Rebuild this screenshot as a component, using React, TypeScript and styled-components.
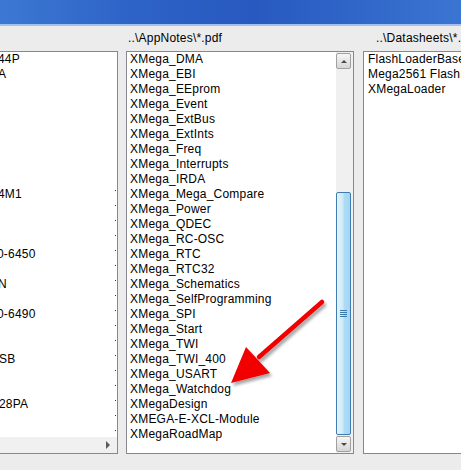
import styled, { createGlobalStyle } from "styled-components";

const GlobalStyle = createGlobalStyle`
	body {
		margin: 0;
		background: #ececec;
		font-family: "Liberation Sans", Arial, sans-serif;
	}
`;

const Window = styled.div`
	position: relative;
	width: 461px;
	height: 470px;
	overflow: hidden;
	background: #ececec;
`;

const TitleBar = styled.div`
	height: 24px;
	border-bottom: 2px solid #a3c1ee;
	background: linear-gradient(90deg, #3c78d3 0%, #2d62c6 30%, #2859c0 55%, #3168c9 80%, #3b75d2 100%);
`;

const Content = styled.div`
	display: grid;
	grid-template-columns: 118px 228px 160px;
	column-gap: 8px;
	padding-top: 5px;
`;

const Column = styled.div<{ $shift?: number }>`
	display: flex;
	flex-direction: column;
	margin-left: ${(p) => p.$shift || 0}px;
	min-width: 0;
`;

const Label = styled.div<{ $indent?: number }>`
	height: 15px;
	line-height: 15px;
	font-size: 12px;
	letter-spacing: 0.2px;
	color: #000;
	padding-left: ${(p) => p.$indent || 0}px;
	margin-bottom: 5px;
	white-space: nowrap;
`;

const ListBox = styled.div<{ $noLeft?: boolean; $noRight?: boolean }>`
	display: flex;
	box-sizing: border-box;
	height: 403px;
	background: #fff;
	border: 1px solid #85888e;
	border-left: ${(p) => (p.$noLeft ? "none" : "1px solid #85888e")};
	border-right: ${(p) => (p.$noRight ? "none" : "1px solid #85888e")};
	overflow: hidden;
`;

const ListInner = styled.div`
	display: flex;
	flex-direction: column;
	flex: 1;
	min-width: 0;
`;

const Rows = styled.div<{ $pad?: number }>`
	display: flex;
	flex-direction: column;
	flex: 1;
	min-width: 0;
	overflow: hidden;
	padding-left: ${(p) => p.$pad || 0}px;
`;

const Row = styled.div<{ $indent?: number; $dot?: boolean }>`
	position: relative;
	flex: none;
	height: 15px;
	line-height: 15px;
	font-size: 12px;
	letter-spacing: 0.2px;
	color: #000;
	white-space: nowrap;
	text-indent: ${(p) => p.$indent || 0}px;

	&::after {
		content: "";
		display: ${(p) => (p.$dot ? "block" : "none")};
		position: absolute;
		right: 1px;
		top: 3px;
		width: 1px;
		height: 1px;
		background: #333;
	}
`;

const VScroll = styled.div`
	display: flex;
	flex-direction: column;
	flex: none;
	width: 17px;
	box-sizing: border-box;
	padding: 1px 2px 1px 0;
	background: #f0f0f0;
`;

const ScrollButton = styled.div<{ $down?: boolean }>`
	display: flex;
	align-items: center;
	justify-content: center;
	flex: none;
	height: 16px;
	box-sizing: border-box;
	border: 1px solid #a0a0a0;
	border-radius: 2px;
	background: linear-gradient(180deg, #f6f6f6 0%, #e6e6e6 50%, #d6d6d6 100%);

	&::before {
		content: "";
		width: 0;
		height: 0;
		border-left: 3px solid transparent;
		border-right: 3px solid transparent;
		border-top: ${(p) => (p.$down ? "3px solid #4a4a4a" : "none")};
		border-bottom: ${(p) => (p.$down ? "none" : "3px solid #4a4a4a")};
	}
`;

const Track = styled.div`
	flex: 1;
	display: flex;
	flex-direction: column;
	padding: 1px 0;
`;

const Thumb = styled.div<{ $top: number; $size: number }>`
	display: flex;
	align-items: center;
	justify-content: center;
	margin-top: ${(p) => p.$top}px;
	height: ${(p) => p.$size}px;
	box-sizing: border-box;
	border: 1px solid #3d7bb0;
	border-radius: 2px;
	background: linear-gradient(90deg, #e4f4fc 0%, #cdeaf9 45%, #afdcf5 55%, #a3d6f3 100%);
`;

const Grip = styled.div`
	width: 7px;
	height: 7px;
	background: repeating-linear-gradient(180deg, #3b78ad 0px, #3b78ad 1px, transparent 1px, transparent 2px);
`;

const HScroll = styled.div`
	display: flex;
	justify-content: flex-end;
	align-items: center;
	flex: none;
	height: 16px;
	background: #f0f0f0;
`;

const RightArrow = styled.div`
	display: flex;
	align-items: center;
	justify-content: center;
	width: 18px;
	height: 16px;

	&::before {
		content: "";
		width: 0;
		height: 0;
		border-top: 4px solid transparent;
		border-bottom: 4px solid transparent;
		border-left: 4px solid #5a5a5a;
	}
`;

const Pointer = styled.svg`
	position: absolute;
	left: 0;
	top: 0;
	pointer-events: none;
`;

const leftRows: { text: string; indent?: number }[] = [];
for (let i = 0; i < 26; i++) leftRows.push({ text: "" });
leftRows[0] = { text: "44P", indent: -2 };
leftRows[1] = { text: "A", indent: -2 };
leftRows[9] = { text: "4M1", indent: -2 };
leftRows[13] = { text: "0-6450", indent: -3 };
leftRows[15] = { text: "N", indent: -2 };
leftRows[17] = { text: "0-6490", indent: -3 };
leftRows[20] = { text: "SB", indent: -1 };
leftRows[23] = { text: "28PA", indent: -1 };

const appNotes = [
	"XMega_DMA",
	"XMega_EBI",
	"XMega_EEprom",
	"XMega_Event",
	"XMega_ExtBus",
	"XMega_ExtInts",
	"XMega_Freq",
	"XMega_Interrupts",
	"XMega_IRDA",
	"XMega_Mega_Compare",
	"XMega_Power",
	"XMega_QDEC",
	"XMega_RC-OSC",
	"XMega_RTC",
	"XMega_RTC32",
	"XMega_Schematics",
	"XMega_SelfProgramming",
	"XMega_SPI",
	"XMega_Start",
	"XMega_TWI",
	"XMega_TWI_400",
	"XMega_USART",
	"XMega_Watchdog",
	"XMegaDesign",
	"XMEGA-E-XCL-Module",
	"XMegaRoadMap",
];

const datasheets = ["FlashLoaderBase", "Mega2561 FlashLoader", "XMegaLoader"];

const App = () => {
	return (
		<Window>
			<GlobalStyle />
			<TitleBar />
			<Content>
				<Column>
					<Label />
					<ListBox $noLeft>
						<ListInner>
							<Rows>
								{leftRows.map((r, i) => (
									<Row key={i} $indent={r.indent} $dot={i >= 9}>
										{r.text}
									</Row>
								))}
							</Rows>
							<HScroll>
								<RightArrow />
							</HScroll>
						</ListInner>
					</ListBox>
				</Column>
				<Column>
					<Label $indent={2}>..\AppNotes\*.pdf</Label>
					<ListBox>
						<Rows $pad={3}>
							{appNotes.map((name) => (
								<Row key={name}>{name}</Row>
							))}
						</Rows>
						<VScroll>
							<ScrollButton />
							<Track>
								<Thumb $top={122} $size={243}>
									<Grip />
								</Thumb>
							</Track>
							<ScrollButton $down />
						</VScroll>
					</ListBox>
				</Column>
				<Column $shift={1}>
					<Label $indent={13}>..\Datasheets\*.pdf</Label>
					<ListBox $noRight>
						<Rows $pad={4}>
							{datasheets.map((name) => (
								<Row key={name}>{name}</Row>
							))}
						</Rows>
					</ListBox>
				</Column>
			</Content>
			<Pointer width="461" height="470" viewBox="0 0 461 470">
				<defs>
					<filter id="shadow" x="-20%" y="-20%" width="140%" height="140%">
						<feDropShadow dx="2" dy="3" stdDeviation="1.6" floodColor="#000" floodOpacity="0.35" />
					</filter>
				</defs>
				<g filter="url(#shadow)">
					<line x1="322" y1="302" x2="259" y2="357" stroke="#f20000" strokeWidth="4.5" strokeLinecap="round" />
					<polygon points="231,383 246,347 270,373" fill="#f20000" />
				</g>
			</Pointer>
		</Window>
	);
};

export default App;
